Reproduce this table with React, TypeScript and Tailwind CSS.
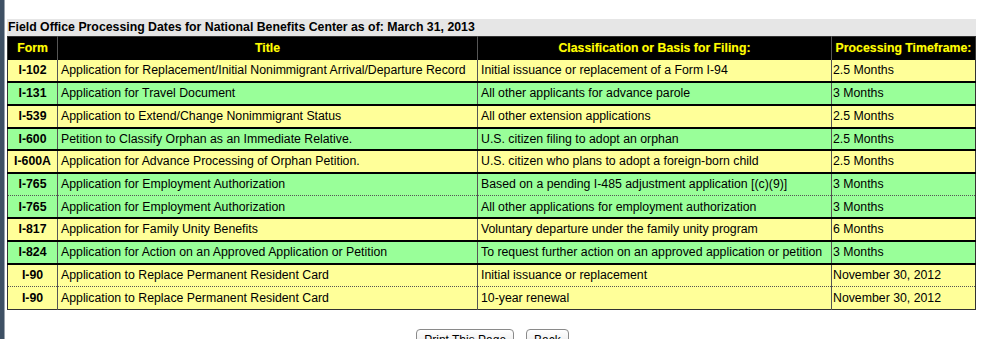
const ROWS = [
  { form: "I-102", title: "Application for Replacement/Initial Nonimmigrant Arrival/Departure Record", basis: "Initial issuance or replacement of a Form I-94", time: "2.5 Months", color: "bg-[#ffff99]", dotted: false },
  { form: "I-131", title: "Application for Travel Document", basis: "All other applicants for advance parole", time: "3 Months", color: "bg-[#99ff99]", dotted: false },
  { form: "I-539", title: "Application to Extend/Change Nonimmigrant Status", basis: "All other extension applications", time: "2.5 Months", color: "bg-[#ffff99]", dotted: false },
  { form: "I-600", title: "Petition to Classify Orphan as an Immediate Relative.", basis: "U.S. citizen filing to adopt an orphan", time: "2.5 Months", color: "bg-[#99ff99]", dotted: false },
  { form: "I-600A", title: "Application for Advance Processing of Orphan Petition.", basis: "U.S. citizen who plans to adopt a foreign-born child", time: "2.5 Months", color: "bg-[#ffff99]", dotted: false },
  { form: "I-765", title: "Application for Employment Authorization", basis: "Based on a pending I-485 adjustment application [(c)(9)]", time: "3 Months", color: "bg-[#99ff99]", dotted: false },
  { form: "I-765", title: "Application for Employment Authorization", basis: "All other applications for employment authorization", time: "3 Months", color: "bg-[#99ff99]", dotted: true },
  { form: "I-817", title: "Application for Family Unity Benefits", basis: "Voluntary departure under the family unity program", time: "6 Months", color: "bg-[#ffff99]", dotted: false },
  { form: "I-824", title: "Application for Action on an Approved Application or Petition", basis: "To request further action on an approved application or petition", time: "3 Months", color: "bg-[#99ff99]", dotted: false },
  { form: "I-90", title: "Application to Replace Permanent Resident Card", basis: "Initial issuance or replacement", time: "November 30, 2012", color: "bg-[#ffff99]", dotted: false },
  { form: "I-90", title: "Application to Replace Permanent Resident Card", basis: "10-year renewal", time: "November 30, 2012", color: "bg-[#ffff99]", dotted: true },
];

const headText = "text-[#ffff00] font-bold [text-shadow:0_0_1px_#6b5a00]";

export default function App() {
  return (
    <div className="flex h-[339px] w-[982px] overflow-hidden bg-white font-['Liberation_Sans',Arial,sans-serif] text-[12.3px] text-black">
      <div className="w-[4px] shrink-0 bg-[#3e5064]" />
      <div className="w-[1px] shrink-0 bg-[#9aa3ad]" />
      <div className="flex flex-1 flex-col pl-[2px] pr-[6px] pt-[19px]">
        <div className="h-[17px] bg-[#e6e6e6] pl-[1px] font-bold leading-[17px]">
          Field Office Processing Dates for National Benefits Center as of: March 31, 2013
        </div>
        <table className="w-full border-collapse border border-[#333]">
          <thead>
            <tr className="h-[23px] bg-black">
              <th className={`w-[50px] border-r border-[#555] text-center ${headText}`}>Form</th>
              <th className={`w-[420px] border-r border-[#555] text-center ${headText}`}>Title</th>
              <th className={`w-[354px] border-r border-[#555] text-center ${headText}`}>Classification or Basis for Filing:</th>
              <th className={`text-center ${headText}`}>Processing Timeframe:</th>
            </tr>
          </thead>
          <tbody>
            {ROWS.map((r, i) => (
              <tr
                key={i}
                className={`h-[22.7px] ${r.color} ${i === 0 ? "" : r.dotted ? "border-t border-dotted border-t-[#555]" : "border-t-[2px] border-t-black"}`}
              >
                <td className="border-r border-[#555] text-center font-bold">{r.form}</td>
                <td className="border-r border-[#555] px-[3px]">{r.title}</td>
                <td className="border-r border-[#555] px-[3px]">{r.basis}</td>
                <td className="px-[1px]">{r.time}</td>
              </tr>
            ))}
          </tbody>
        </table>
        <div className="mt-[19px] flex justify-center gap-[12px] pl-[2px]">
          <button className="h-[22px] rounded-[4px] border border-[#8a8a8a] bg-gradient-to-b from-white to-[#e4e4e4] px-[7px] text-[12px]">
            Print This Page
          </button>
          <button className="h-[22px] rounded-[4px] border border-[#8a8a8a] bg-gradient-to-b from-white to-[#e4e4e4] px-[7px] text-[12px]">
            Back
          </button>
        </div>
      </div>
    </div>
  );
}
